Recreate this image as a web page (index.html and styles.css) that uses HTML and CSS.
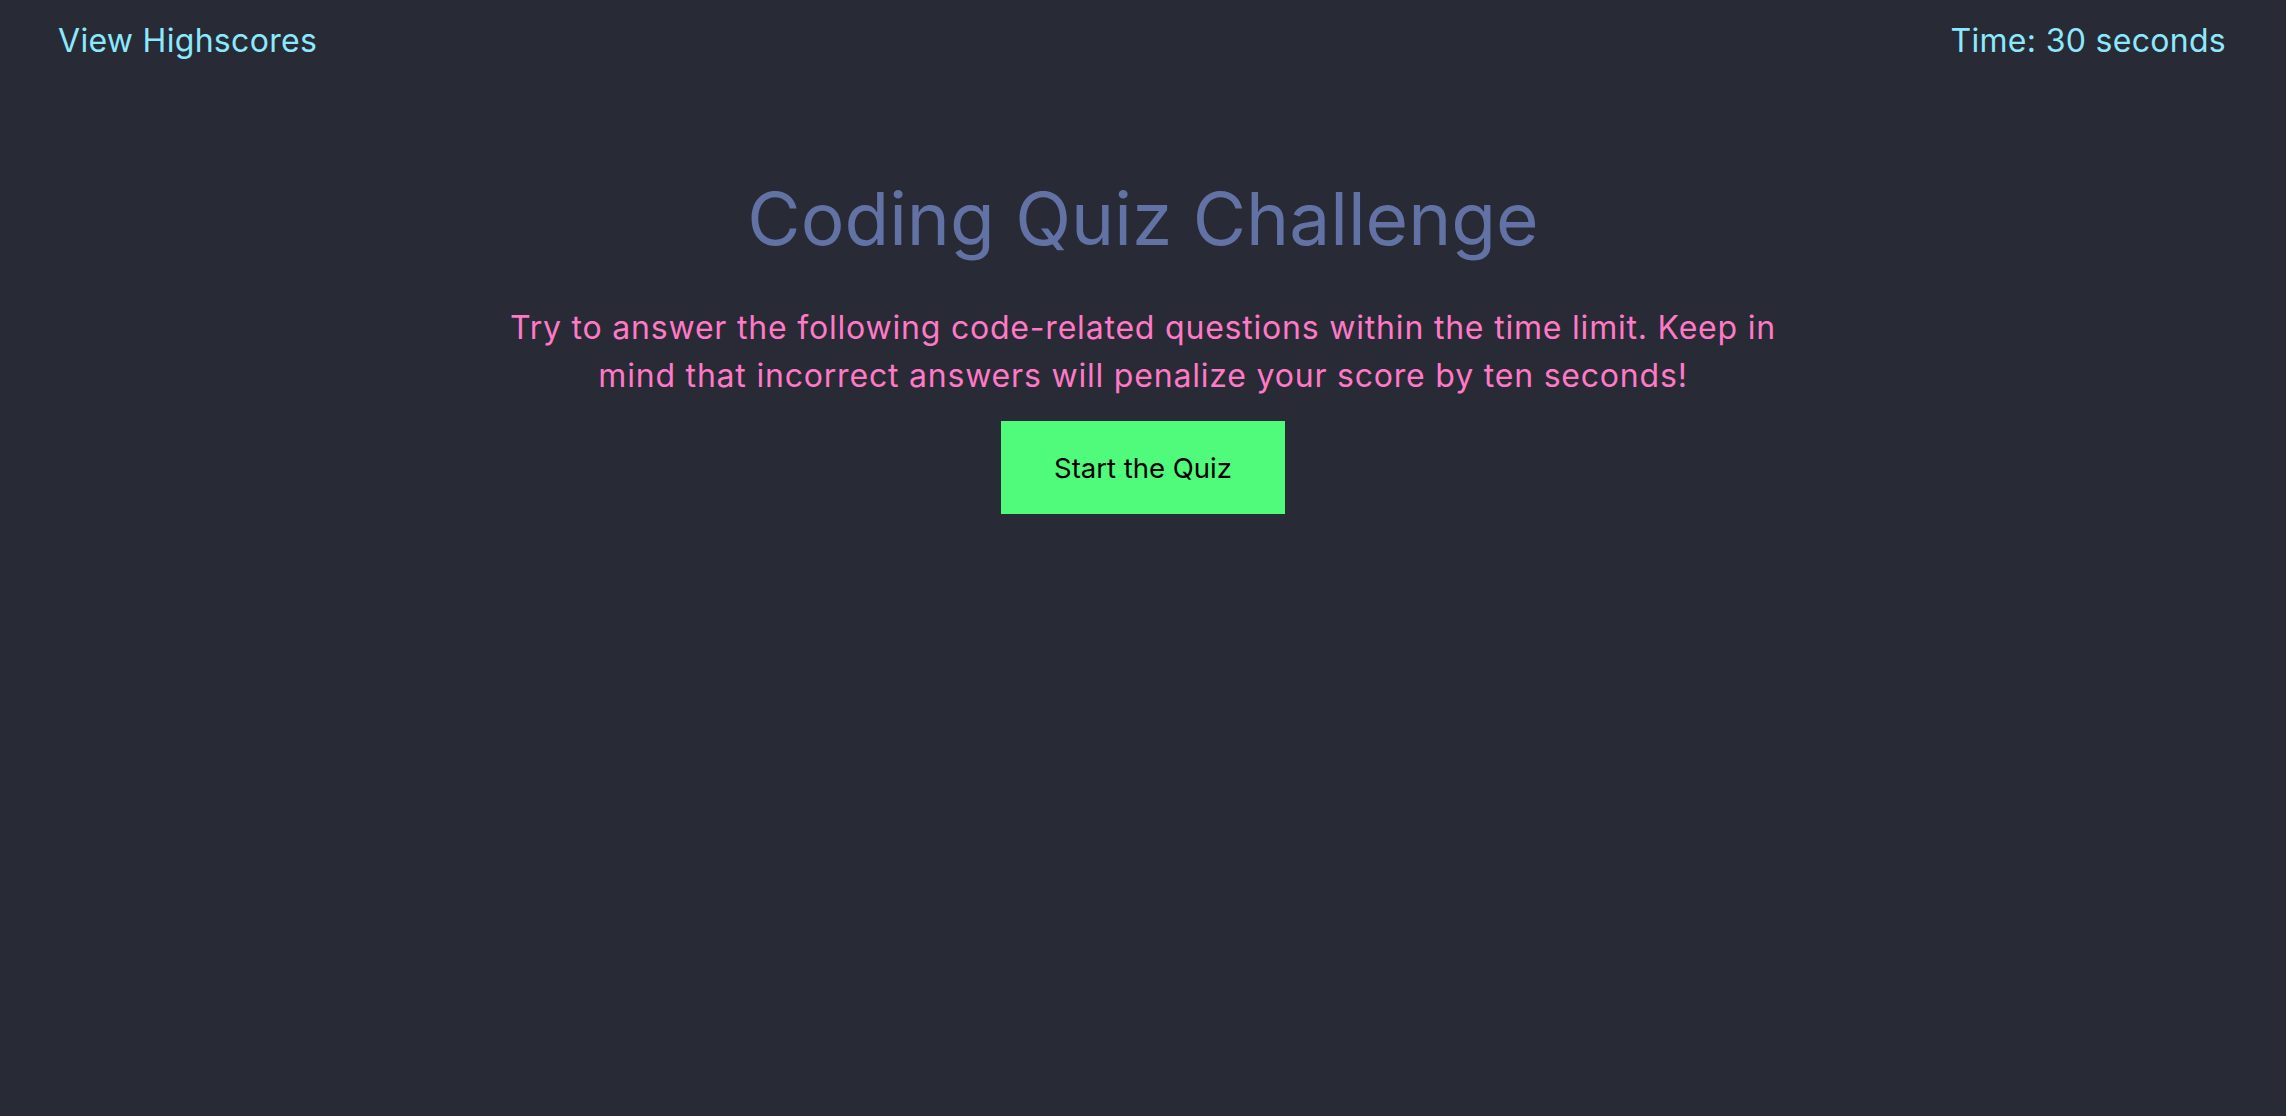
FILE: index.html
```html
<!DOCTYPE html>
<html lang="en">
<head>
<meta charset="utf-8">
<title>Coding Quiz Challenge</title>
<link rel="stylesheet" href="styles.css">
</head>
<body>
<header class="topbar">
  <a class="highscores" href="#">View Highscores</a>
  <div class="timer">Time: <span>30</span> seconds</div>
</header>
<main class="intro">
  <h1 class="title">Coding Quiz Challenge</h1>
  <p class="lead">Try to answer the following code-related questions within the time limit. Keep in mind that incorrect answers will penalize your score by ten seconds!</p>
  <button class="start">Start the Quiz</button>
</main>
</body>
</html>
```
FILE: styles.css
```css
html, body {
  margin: 0;
  padding: 0;
  background: #282a36;
  min-height: 100%;
}
body {
  font-family: Inter, "Open Sans", sans-serif;
  color: #8be9fd;
}
.topbar {
  display: flex;
  justify-content: space-between;
  align-items: center;
  padding: 17px 60px 0 58px;
  font-size: 32px;
  line-height: 48px;
  letter-spacing: 0.3px;
}
.highscores {
  color: #8be9fd;
  text-decoration: none;
}
.timer {
  color: #8be9fd;
}
.intro {
  display: flex;
  flex-direction: column;
  align-items: center;
  text-align: center;
}
.title {
  margin: 101px 0 0;
  font-size: 73px;
  line-height: 105px;
  font-weight: 400;
  color: #6272a4;
}
.lead {
  margin: 33px 0 0;
  width: 1300px;
  font-size: 32px;
  line-height: 48px;
  letter-spacing: 0.8px;
  color: #ff79c6;
}
.start {
  margin-top: 21px;
  width: 284px;
  height: 93px;
  border: none;
  background: #50fa7b;
  color: #000;
  font-family: inherit;
  font-size: 27.5px;
  cursor: pointer;
}
```
